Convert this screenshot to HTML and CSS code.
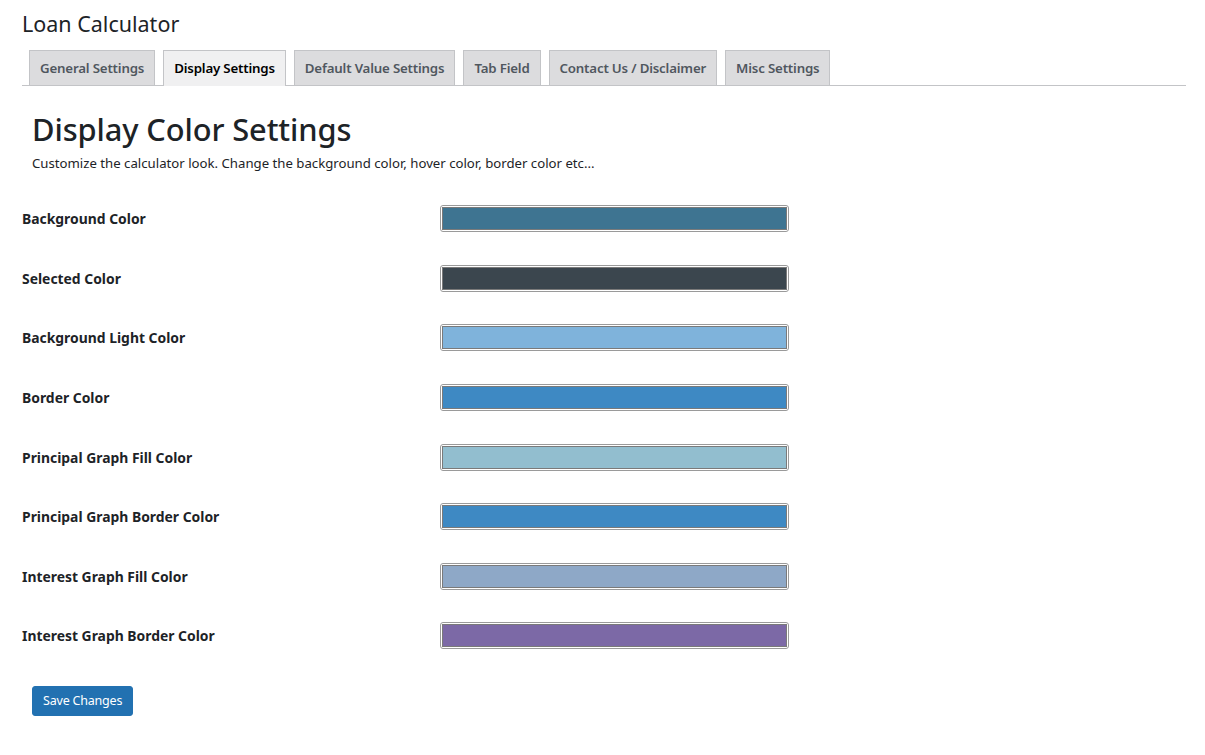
FILE: index.html
```html
<!DOCTYPE html>
<html>
<head>
<meta charset="utf-8">
<link rel="stylesheet" href="styles.css">
</head>
<body>
<div class="wrap">
  <h1 class="page-title">Loan Calculator</h1>
  <nav class="tabs">
    <a class="tab">General Settings</a>
    <a class="tab active">Display Settings</a>
    <a class="tab">Default Value Settings</a>
    <a class="tab">Tab Field</a>
    <a class="tab">Contact Us / Disclaimer</a>
    <a class="tab">Misc Settings</a>
  </nav>
  <div class="intro">
    <h2 class="section-title">Display Color Settings</h2>
    <p class="desc">Customize the calculator look. Change the background color, hover color, border color etc...</p>
  </div>
  <div class="form">
    <div class="row"><div class="label">Background Color</div><div class="picker"><div class="swatch c1"></div></div></div>
    <div class="row"><div class="label">Selected Color</div><div class="picker"><div class="swatch c2"></div></div></div>
    <div class="row"><div class="label">Background Light Color</div><div class="picker"><div class="swatch c3"></div></div></div>
    <div class="row"><div class="label">Border Color</div><div class="picker"><div class="swatch c4"></div></div></div>
    <div class="row"><div class="label">Principal Graph Fill Color</div><div class="picker"><div class="swatch c5"></div></div></div>
    <div class="row"><div class="label">Principal Graph Border Color</div><div class="picker"><div class="swatch c4"></div></div></div>
    <div class="row"><div class="label">Interest Graph Fill Color</div><div class="picker"><div class="swatch c6"></div></div></div>
    <div class="row"><div class="label">Interest Graph Border Color</div><div class="picker"><div class="swatch c7"></div></div></div>
  </div>
  <div class="actions"><button class="btn">Save Changes</button></div>
</div>
</body>
</html>
```

FILE: styles.css
```css
html, body {
  margin: 0;
  padding: 0;
  background: #fff;
}
body {
  font-family: "Noto Sans", "Open Sans", sans-serif;
  color: #1d2327;
}
.wrap {
  padding: 0 19px 0 22px;
}
.page-title {
  margin: 0;
  padding-top: 9px;
  font-size: 21.5px;
  font-weight: 400;
  line-height: 30px;
  color: #1d2327;
}
.tabs {
  margin-top: 11px;
  display: flex;
  gap: 8px;
  padding-left: 7px;
  border-bottom: 1px solid #c3c4c7;
  height: 35px;
}
.tab {
  display: block;
  height: 35px;
  box-sizing: border-box;
  padding: 0 10px;
  border: 1px solid #c3c4c7;
  border-bottom: none;
  background: #dcdcde;
  color: #50575e;
  font-size: 13.3px;
  font-weight: 600;
  line-height: 34px;
  letter-spacing: -0.19px;
  white-space: nowrap;
}
.tab.active {
  background: #f0f0f1;
  color: #000;
  height: 36px;
  margin-bottom: -1px;
}
.intro {
  padding-left: 10px;
}
.section-title {
  margin: 24px 0 0;
  font-size: 30.8px;
  font-weight: 500;
  line-height: 38px;
  color: #1d2327;
  letter-spacing: -0.1px;
}
.desc {
  margin: 6px 0 0;
  font-size: 13.2px;
  line-height: 18px;
  letter-spacing: 0;
}
.form {
  margin-top: 17px;
  display: flex;
  flex-direction: column;
}
.row {
  display: grid;
  grid-template-columns: 418px 349px;
  align-items: center;
  height: 59.6px;
}
.label {
  font-size: 13.9px;
  font-weight: 700;
  color: #1d2327;
  letter-spacing: 0;
}
.picker {
  box-sizing: border-box;
  height: 27px;
  border: 1px solid #9a9a9a;
  border-radius: 3px;
  padding: 1px;
  background: #fff;
}
.swatch {
  height: 100%;
  box-sizing: border-box;
  border: 1px solid #7a7a7a;
}
.c1 { background: #3e7491; }
.c2 { background: #3b464e; }
.c3 { background: #7fb3db; }
.c4 { background: #3e89c3; }
.c5 { background: #92becf; }
.c6 { background: #8ea8c7; }
.c7 { background: #7c69a6; }
.actions {
  padding-left: 10px;
  margin-top: 20px;
}
.btn {
  font-family: inherit;
  font-size: 12.5px;
  letter-spacing: -0.2px;
  background: #2271b1;
  color: #fff;
  border: 1px solid #2271b1;
  border-radius: 3px;
  height: 30px;
  padding: 0 10px;
  line-height: 28px;
  cursor: pointer;
}
```
